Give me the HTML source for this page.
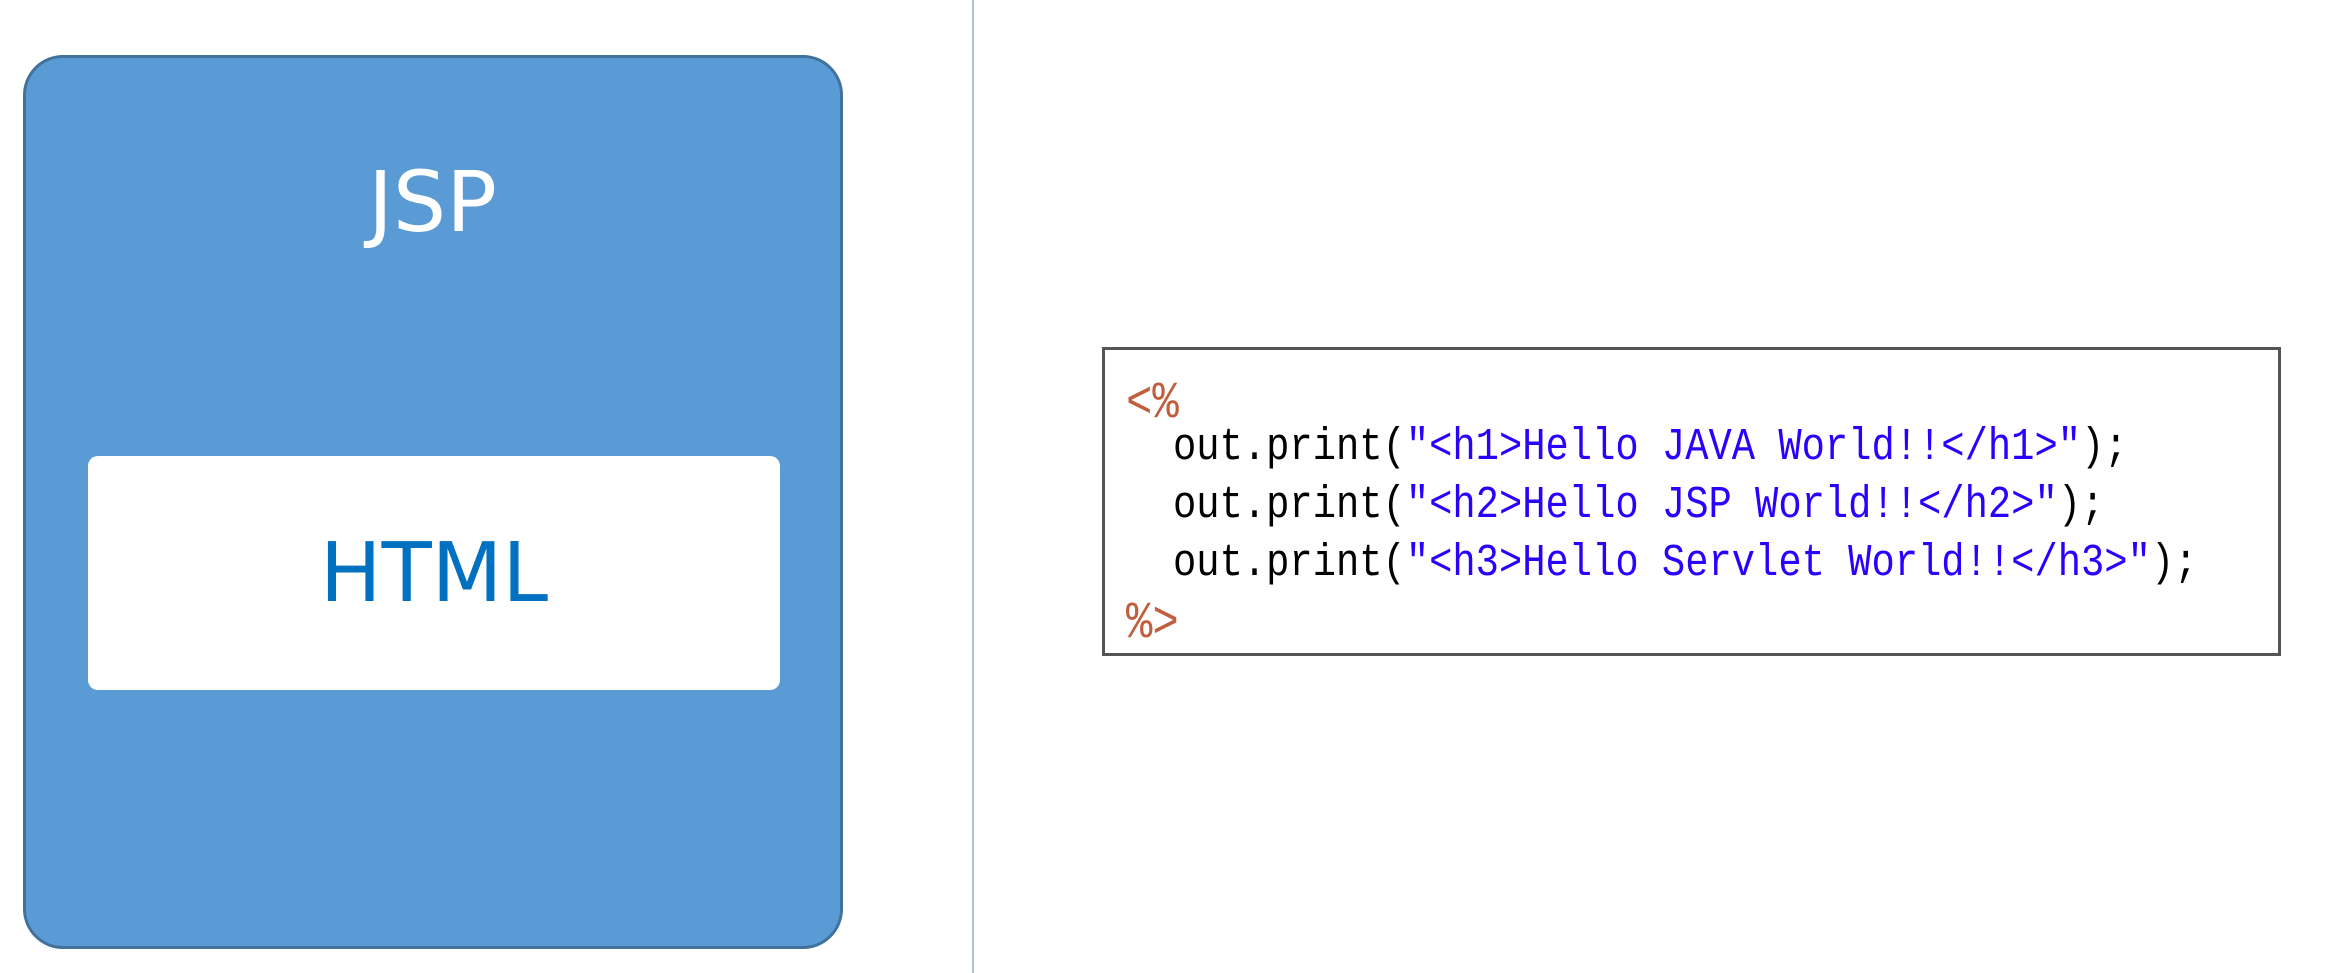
<!DOCTYPE html>
<html><head><meta charset="utf-8"><style>
html,body{margin:0;padding:0;width:2328px;height:973px;background:#fff;overflow:hidden;position:relative}
.jsp{position:absolute;left:23px;top:55px;width:820px;height:894px;background:#5B9BD5;border:3px solid #41719C;border-radius:40px;box-sizing:border-box}
.jt{position:absolute;left:23px;width:819px;top:142px;text-align:center;color:#fff;font:84px "DejaVu Sans","Liberation Sans",sans-serif;line-height:120px}
.html{position:absolute;left:88px;top:456px;width:692px;height:234px;background:#fff;border-radius:10px}
.ht{position:absolute;left:88px;width:692px;top:514px;text-align:center;color:#0070C0;font:82px "DejaVu Sans","Liberation Sans",sans-serif;line-height:120px}
.div{position:absolute;left:972px;top:0;width:2px;height:973px;background:#A9C3DC}
.code{position:absolute;left:1102px;top:347px;width:1179px;height:309px;border:3px solid #555;box-sizing:border-box}
.l{position:absolute;font:38.8px "Liberation Mono",monospace;white-space:pre;color:#000;transform:scaleY(1.18);transform-origin:0 100%;line-height:1}
.b{color:#2A00FF}.r{color:#BF5F3F}
</style></head><body>
<div class="jsp"></div><div class="jt">JSP</div>
<div class="html"></div><div class="ht">HTML</div>
<div class="div"></div>
<div class="code"></div>
<div class="l r" style="left:1126px;top:386px;font-size:44px">&lt;%</div>
<div class="l" style="left:1173px;top:432px">out.print(<span class="b">"&lt;h1&gt;Hello JAVA World!!&lt;/h1&gt;"</span>);</div>
<div class="l" style="left:1173px;top:490px">out.print(<span class="b">"&lt;h2&gt;Hello JSP World!!&lt;/h2&gt;"</span>);</div>
<div class="l" style="left:1173px;top:548px">out.print(<span class="b">"&lt;h3&gt;Hello Servlet World!!&lt;/h3&gt;"</span>);</div>
<div class="l r" style="left:1126px;top:606px;font-size:44px">%&gt;</div>
</body></html>
